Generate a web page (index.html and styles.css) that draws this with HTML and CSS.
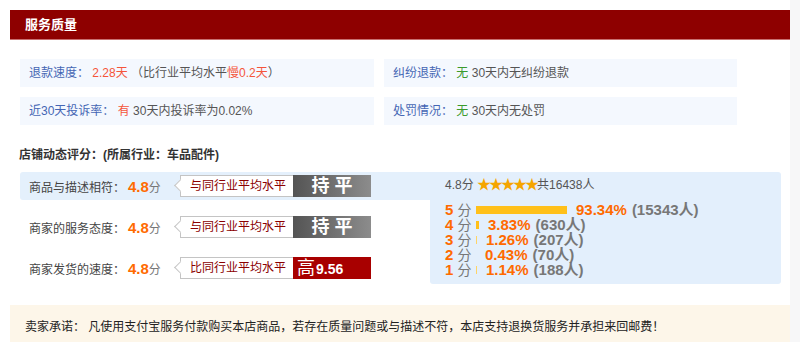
FILE: index.html
```html
<!DOCTYPE html>
<html lang="zh-CN">
<head>
    <meta charset="UTF-8">
    <title>服务质量</title>
    <link rel="stylesheet" href="styles.css">
</head>
<body>

<div class="page">
    <div class="box-title">服务质量</div>

    <div class="info-grid">
        <div class="info">
            <span class="info-label">退款速度： </span>
            <span class="red">2.28天</span>
            <span class="muted">（比行业平均水平<span class="red">慢0.2天</span>）</span>
        </div>
        <div class="info">
            <span class="info-label">纠纷退款： </span>
            <span class="green">无</span>
            <span class="muted">30天内无纠纷退款</span>
        </div>
        <div class="info">
            <span class="info-label">近30天投诉率： </span>
            <span class="red">有</span>
            <span class="muted">30天内投诉率为0.02%</span>
        </div>
        <div class="info">
            <span class="info-label">处罚情况： </span>
            <span class="green">无</span>
            <span class="muted">30天内无处罚</span>
        </div>
    </div>

    <div class="score-title">店铺动态评分：(所属行业：车品配件)</div>

    <div class="score-wrap">
        <div class="score-list">
            <div class="score-row active">
                <span class="score-label">商品与描述相符：</span>
                <span class="score-num"><b>4.8</b>分</span>
                <span class="tag">与同行业平均水平</span>
                <span class="cmp even">持 平</span>
            </div>
            <div class="score-row">
                <span class="score-label">商家的服务态度：</span>
                <span class="score-num"><b>4.8</b>分</span>
                <span class="tag">与同行业平均水平</span>
                <span class="cmp even">持 平</span>
            </div>
            <div class="score-row">
                <span class="score-label">商家发货的速度：</span>
                <span class="score-num"><b>4.8</b>分</span>
                <span class="tag">比同行业平均水平</span>
                <span class="cmp high">高<b>9.56</b></span>
            </div>
        </div>

        <div class="dist">
            <div class="dist-head">4.8分 <span class="stars">★★★★★</span>共16438人</div>
            <div class="dist-rows">
                <div class="dist-row"><span class="star-n">5 <i>分</i></span><span class="bar" style="width: 91px"></span><span class="pct">93.34%</span><span class="cnt">(15343人)</span></div>
                <div class="dist-row"><span class="star-n">4 <i>分</i></span><span class="bar" style="width: 3px"></span><span class="pct">3.83%</span><span class="cnt">(630人)</span></div>
                <div class="dist-row"><span class="star-n">3 <i>分</i></span><span class="bar thin" style="width: 1px"></span><span class="pct">1.26%</span><span class="cnt">(207人)</span></div>
                <div class="dist-row"><span class="star-n">2 <i>分</i></span><span class="bar" style="width: 0px"></span><span class="pct">0.43%</span><span class="cnt">(70人)</span></div>
                <div class="dist-row"><span class="star-n">1 <i>分</i></span><span class="bar thin" style="width: 1px"></span><span class="pct">1.14%</span><span class="cnt">(188人)</span></div>
            </div>
        </div>
    </div>

    <div class="promise">卖家承诺： 凡使用支付宝服务付款购买本店商品，若存在质量问题或与描述不符，本店支持退换货服务并承担来回邮费！</div>
</div>

</body>
</html>
```

FILE: styles.css
```css
html {
    background: #f7f7f8;
}
body {
    margin: 0;
    width: 790px;
    height: 342px;
    overflow: hidden;
    background: #fff;
    font-family: "Liberation Sans", "Noto Sans CJK SC", sans-serif;
    font-size: 12px;
    color: #333;
}
.page {
    padding: 10px 0 0 10px;
}
.box-title {
    width: 765px;
    height: 29px;
    line-height: 29px;
    padding-left: 15px;
    background: #8e0000;
    border-bottom: 1px solid #c87070;
    color: #fff;
    font-weight: bold;
    font-size: 13px;
}

/* service info */
.info-grid {
    display: grid;
    grid-template-columns: 354px 353px;
    grid-auto-rows: 28px;
    gap: 10px;
    margin: 19px 0 0 10px;
}
.info {
    background: #f4f8fe;
    padding-left: 9px;
    line-height: 28px;
    white-space: nowrap;
}
.info-label { color: #4466b4; }
.red { color: #f4553a; }
.green { color: #3a9a2c; }
.muted { color: #555; }

/* dynamic score */
.score-title {
    margin: 22px 0 0 9px;
    line-height: 16px;
    font-weight: bold;
}
.score-wrap {
    display: flex;
    margin: 9px 0 0 10px;
}
.score-list {
    width: 410px;
}
.score-row {
    display: flex;
    align-items: center;
    height: 28px;
    margin-bottom: 13px;
    padding-left: 9px;
    color: #444;
}
.score-row:last-child {
    margin-bottom: 0;
}
.score-row.active {
    background: #e4f0fc;
    border-radius: 3px 0 0 3px;
}
.score-label {
    width: 99px;
    font-size: 12px;
}
.score-num {
    width: 46px;
    color: #777;
}
.score-num b {
    color: #ff6a00;
    font-size: 15px;
}
.tag {
    position: relative;
    margin-left: 6px;
    width: 103px;
    height: 20px;
    line-height: 20px;
    padding-left: 9px;
    background: #fff;
    border: 1px solid #c4c4c4;
    border-right: none;
    color: #8b0000;
    font-size: 12px;
}
.tag::before {
    content: "";
    position: absolute;
    left: -5px;
    top: 5px;
    width: 8px;
    height: 8px;
    background: #fff;
    border-left: 1px solid #c4c4c4;
    border-bottom: 1px solid #c4c4c4;
    transform: rotate(45deg);
}
.cmp {
    width: 78px;
    height: 22px;
    line-height: 22px;
    color: #fff;
    font-size: 18px;
}
.cmp.even {
    text-align: center;
    font-weight: bold;
    background: linear-gradient(to right, #545454, #8c8c8c);
}
.cmp.high {
    padding-left: 4px;
    width: 74px;
    background: #a80000;
}
.cmp.high b {
    font-size: 14px;
    margin-left: 1px;
}

.dist {
    width: 336px;
    height: 108px;
    padding: 4px 0 0 15px;
    background: #e3effc;
    border-radius: 0 3px 3px 3px;
}
.dist-head {
    line-height: 16px;
    color: #555;
}
.stars {
    color: #f5a500;
    font-size: 14px;
    letter-spacing: -2px;
}
.dist-rows {
    margin-top: 9px;
}
.dist-row {
    display: flex;
    align-items: center;
    height: 15px;
    line-height: 15px;
    font-size: 15px;
    font-weight: bold;
    white-space: nowrap;
}
.star-n {
    width: 31px;
    color: #ff6a00;
}
.star-n i {
    font-style: normal;
    font-weight: normal;
    color: #777;
    font-size: 14px;
}
.bar {
    height: 8px;
    background: #ffc01a;
}
.bar.thin {
    background: #ffd466;
}
.pct {
    margin-left: 9px;
    color: #ff6a00;
}
.cnt {
    margin-left: 5px;
    color: #777;
}

/* promise */
.promise {
    width: 765px;
    height: 42px;
    margin-top: 21px;
    padding-left: 15px;
    line-height: 44px;
    background: #fdf6e9;
    color: #222;
}
```
